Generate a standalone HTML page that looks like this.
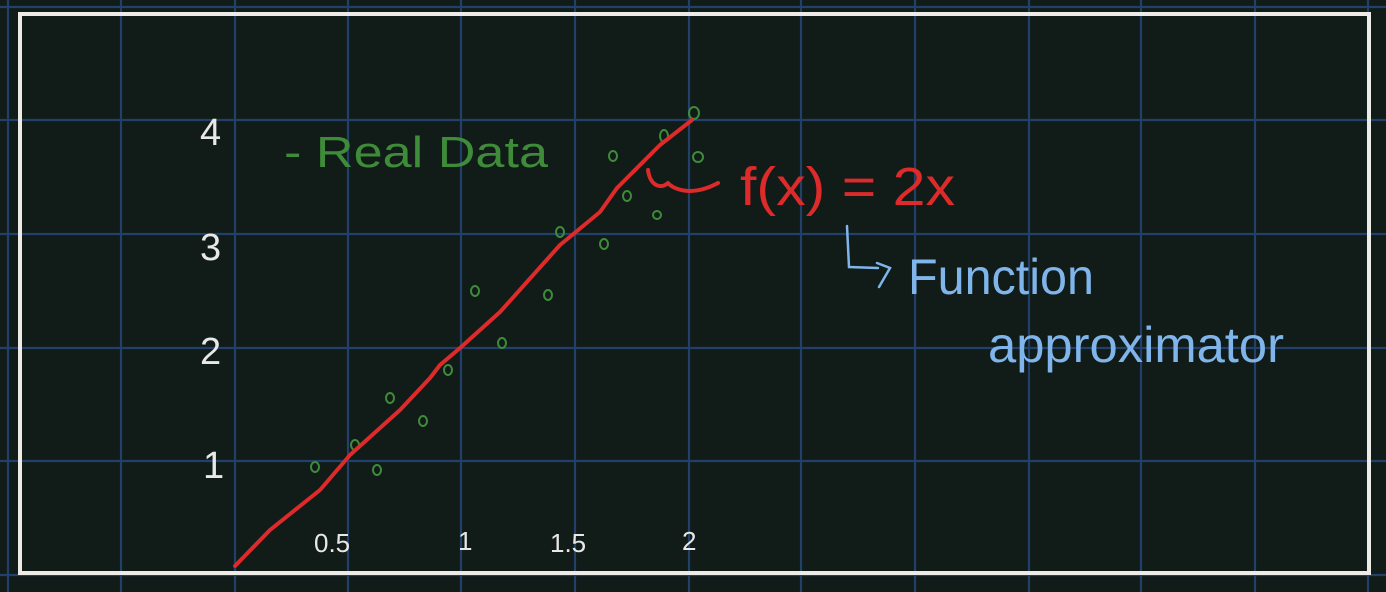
<!DOCTYPE html>
<html><head><style>
html,body{margin:0;padding:0;background:#111b17;width:1386px;height:592px;overflow:hidden}
svg{display:block}
text{font-family:"Liberation Sans",sans-serif}
</style></head><body>
<svg width="1386" height="592" viewBox="0 0 1386 592">
<rect width="1386" height="592" fill="#111b17"/>
<g stroke="#21416a" stroke-width="2.2">
<line x1="8" y1="0" x2="8" y2="592"/><line x1="121" y1="0" x2="121" y2="592"/><line x1="235" y1="0" x2="235" y2="592"/>
<line x1="348" y1="0" x2="348" y2="592"/><line x1="461" y1="0" x2="461" y2="592"/><line x1="575" y1="0" x2="575" y2="592"/>
<line x1="689" y1="0" x2="689" y2="592"/><line x1="801" y1="0" x2="801" y2="592"/><line x1="915" y1="0" x2="915" y2="592"/>
<line x1="1029" y1="0" x2="1029" y2="592"/><line x1="1141" y1="0" x2="1141" y2="592"/><line x1="1255" y1="0" x2="1255" y2="592"/>
<line x1="1368" y1="0" x2="1368" y2="592"/>
<line x1="0" y1="7" x2="1386" y2="7"/><line x1="0" y1="120" x2="1386" y2="120"/><line x1="0" y1="234" x2="1386" y2="234"/>
<line x1="0" y1="348" x2="1386" y2="348"/><line x1="0" y1="461" x2="1386" y2="461"/><line x1="0" y1="575" x2="1386" y2="575"/>
</g>
<rect x="20" y="14" width="1349" height="559" fill="none" stroke="#ecebe8" stroke-width="4"/>
<g fill="#e8e8e8" font-size="38">
<text x="200" y="145">4</text><text x="200" y="260">3</text><text x="200" y="364">2</text><text x="203" y="478">1</text>
</g>
<g fill="#e8e8e8" font-size="26">
<text x="314" y="552">0.5</text><text x="458" y="550">1</text><text x="550" y="552">1.5</text><text x="682" y="550">2</text>
</g>
<text x="284" y="167" fill="#3e8b3a" font-size="44" textLength="264" lengthAdjust="spacingAndGlyphs">- Real Data</text>
<g fill="none" stroke="#3e8b3a" stroke-width="2">
<ellipse cx="315" cy="467" rx="4" ry="5"/><ellipse cx="355" cy="445" rx="4" ry="5"/><ellipse cx="377" cy="470" rx="4" ry="5"/>
<ellipse cx="390" cy="398" rx="4" ry="5"/><ellipse cx="423" cy="421" rx="4" ry="5"/><ellipse cx="448" cy="370" rx="4" ry="5"/>
<ellipse cx="475" cy="291" rx="4" ry="5"/><ellipse cx="502" cy="343" rx="4" ry="5"/><ellipse cx="548" cy="295" rx="4" ry="5"/>
<ellipse cx="560" cy="232" rx="4" ry="5"/><ellipse cx="604" cy="244" rx="4" ry="5"/><ellipse cx="613" cy="156" rx="4" ry="5"/>
<ellipse cx="627" cy="196" rx="4" ry="5"/><ellipse cx="657" cy="215" rx="4" ry="4"/><ellipse cx="664" cy="136" rx="4" ry="6"/>
<ellipse cx="694" cy="113" rx="5" ry="6"/><ellipse cx="698" cy="157" rx="5" ry="5"/>
</g>
<g fill="none" stroke="#dd2a2a" stroke-width="4" stroke-linecap="round" stroke-linejoin="round">
<path d="M235 566 L270 530 L320 490 L350 455 L400 410 L430 378 L440 365 L460 348 L500 312 L560 245 L600 212 L617 188 L630 175 L660 145 L692 120"/>
<path d="M648 170 C650 185 660 190 668 183 C672 188 690 198 718 183"/>
</g>
<text x="740" y="205" fill="#dd2a2a" font-size="54" textLength="215" lengthAdjust="spacingAndGlyphs">f(x) = 2x</text>
<g fill="none" stroke="#7fb5ea" stroke-width="2.5" stroke-linecap="round">
<path d="M847 226 L849 267 L878 268 M877 263 L890 268 L879 287"/>
</g>
<text x="908" y="294" fill="#7fb5ea" font-size="50" textLength="186" lengthAdjust="spacingAndGlyphs">Function</text>
<text x="988" y="362" fill="#7fb5ea" font-size="50" textLength="296" lengthAdjust="spacingAndGlyphs">approximator</text>
</svg>
</body></html>
